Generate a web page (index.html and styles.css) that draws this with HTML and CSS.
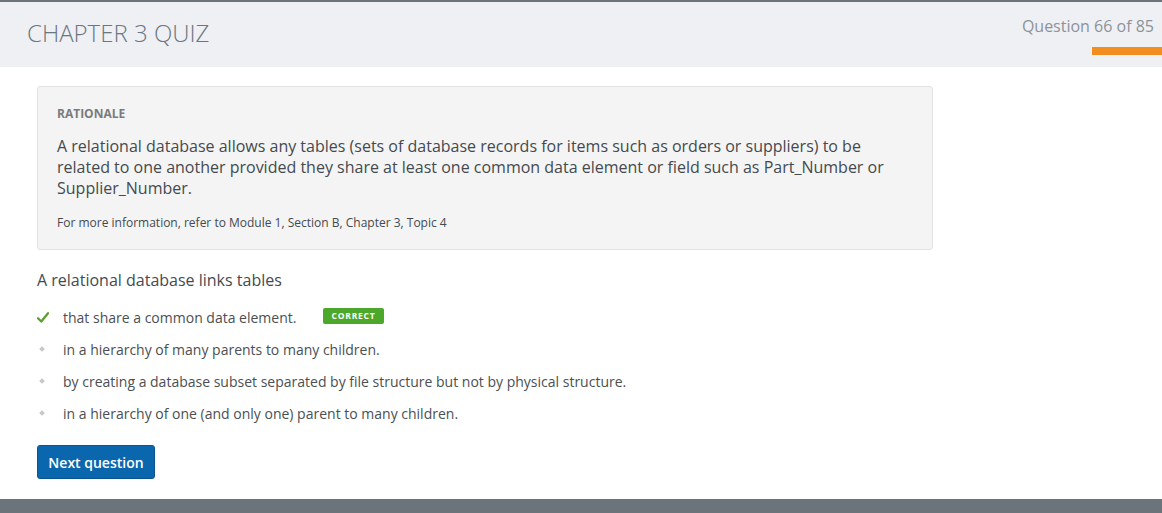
FILE: index.html
```html
<!DOCTYPE html>
<html>
<head>
<meta charset="utf-8">
<link rel="stylesheet" href="styles.css">
</head>
<body>
<header class="topbar">
  <h1 class="title">CHAPTER 3 QUIZ</h1>
  <div class="progress">
    <div class="progress-text">Question 66 of 85</div>
    <div class="progress-bar"></div>
  </div>
</header>
<main class="content">
  <section class="rationale">
    <div class="rationale-label">RATIONALE</div>
    <p class="rationale-text">A relational database allows any tables (sets of database records for items such as orders or suppliers) to be related to one another provided they share at least one common data element or field such as Part_Number or Supplier_Number.</p>
    <p class="rationale-ref">For more information, refer to Module 1, Section B, Chapter 3, Topic 4</p>
  </section>
  <h2 class="question">A relational database links tables</h2>
  <ul class="options">
    <li class="option">
      <span class="marker"><svg width="12" height="11" viewBox="0 0 12 11"><path d="M1 6.2 L4.3 9.5 L11 1.2" fill="none" stroke="#5a9e2e" stroke-width="2.2" stroke-linecap="round" stroke-linejoin="round"/></svg></span>
      <span class="opt-text">that share a common data element.</span>
      <span class="badge">CORRECT</span>
    </li>
    <li class="option"><span class="marker"><span class="dot"></span></span><span class="opt-text">in a hierarchy of many parents to many children.</span></li>
    <li class="option"><span class="marker"><span class="dot"></span></span><span class="opt-text">by creating a database subset separated by file structure but not by physical structure.</span></li>
    <li class="option"><span class="marker"><span class="dot"></span></span><span class="opt-text">in a hierarchy of one (and only one) parent to many children.</span></li>
  </ul>
  <button class="next">Next question</button>
</main>
<footer class="footer"></footer>
</body>
</html>
```
FILE: styles.css
```css
html, body {
  margin: 0;
  padding: 0;
  background: #ffffff;
  font-family: "Open Sans", "Liberation Sans", sans-serif;
  color: #444a4f;
}
.topbar {
  border-top: 2px solid #6b737b;
  background: #eff0f4;
  height: 65px;
  display: flex;
  justify-content: space-between;
  align-items: flex-start;
  box-sizing: content-box;
}
.title {
  margin: 0;
  padding: 14px 0 0 27px;
  font-size: 24px;
  font-weight: 300;
  line-height: 33px;
  color: #6a7682;
  letter-spacing: 0;
}
.progress {
  display: flex;
  flex-direction: column;
  align-items: flex-end;
  padding-top: 13px;
}
.progress-text {
  font-size: 16px;
  line-height: 22px;
  color: #8b939a;
  padding-right: 8px;
}
.progress-bar {
  margin-top: 10px;
  width: 70px;
  height: 8px;
  background: #f28e1f;
}
.content {
  padding: 19px 0 0 37px;
}
.rationale {
  width: 896px;
  box-sizing: border-box;
  background: #f4f4f4;
  border: 1px solid #e2e2e2;
  border-radius: 3px;
  padding: 18px 19px 18px 19px;
}
.rationale-label {
  font-size: 12px;
  font-weight: 700;
  color: #7b7b7b;
  line-height: 17px;
}
.rationale-text {
  margin: 14px 0 0 0;
  font-size: 16px;
  line-height: 21px;
  color: #444a4f;
}
.rationale-ref {
  margin: 15px 0 0 0;
  font-size: 12px;
  line-height: 17px;
  color: #444a4f;
}
.question {
  margin: 19px 0 0 0;
  font-size: 16px;
  font-weight: 400;
  line-height: 22px;
  color: #444a4f;
}
.options {
  list-style: none;
  margin: 10px 0 0 0;
  padding: 0;
}
.option {
  display: flex;
  align-items: center;
  height: 32px;
  font-size: 14px;
  color: #4a4f54;
}
.marker {
  width: 26px;
  display: flex;
  align-items: center;
}
.dot {
  display: block;
  width: 4px;
  height: 4px;
  margin-left: 3px;
  background: #c8c8c8;
  transform: rotate(45deg);
}
.badge {
  margin-left: 27px;
  background: #4ca82b;
  color: #ffffff;
  font-size: 8.5px;
  font-weight: 700;
  letter-spacing: 0.8px;
  border-radius: 2px;
  padding: 0 8px;
  height: 16px;
  line-height: 16px;
  position: relative;
  top: -1px;
}
.next {
  margin-top: 16px;
  background: #0b67ad;
  border: 1px solid #08558f;
  border-radius: 3px;
  color: #ffffff;
  font-family: "Open Sans", "Liberation Sans", sans-serif;
  font-size: 14px;
  font-weight: 600;
  width: 118px;
  height: 34px;
  padding: 0;
  cursor: pointer;
}
.footer {
  position: fixed;
  left: 0;
  right: 0;
  bottom: 0;
  height: 14px;
  background: #6b737b;
}
```
